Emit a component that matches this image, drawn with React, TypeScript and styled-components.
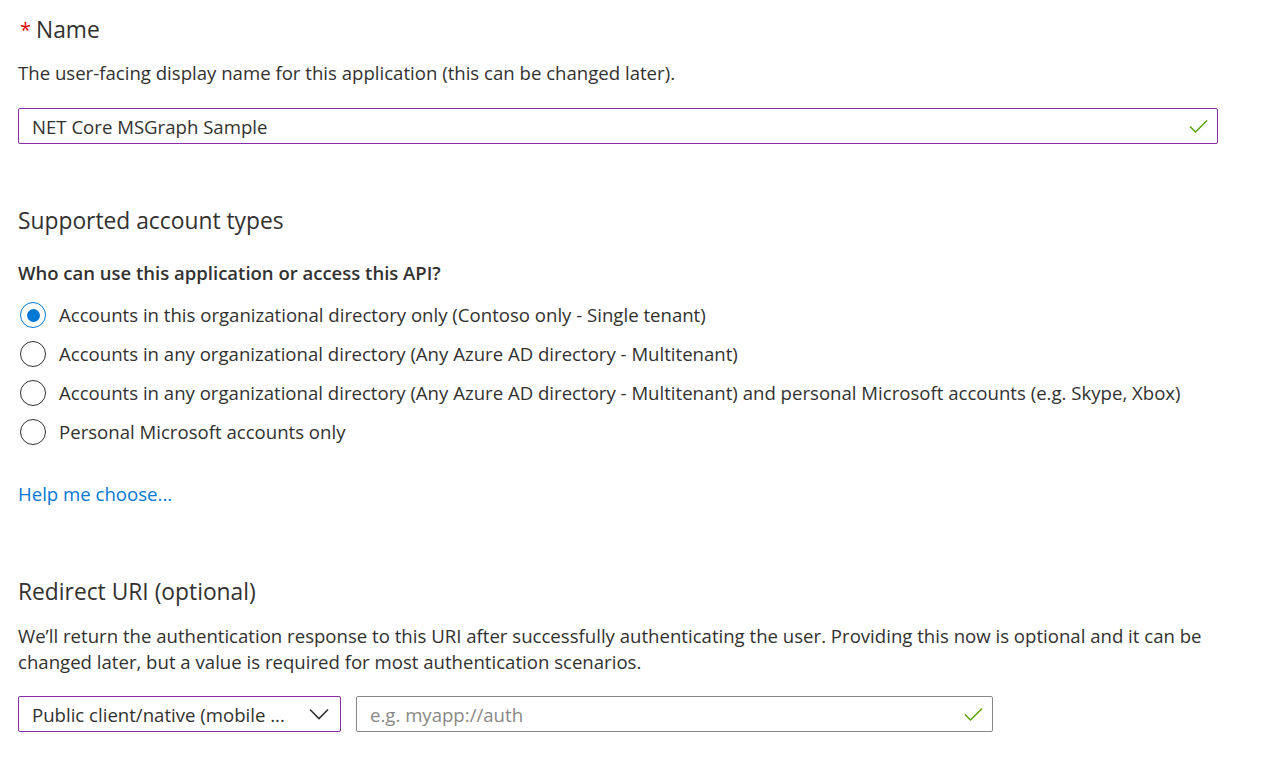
import React from "react";
import styled, { createGlobalStyle } from "styled-components";

const Global = createGlobalStyle`
  html, body { margin: 0; padding: 0; background: #fff; }
  body { font-family: "Open Sans", "Noto Sans", sans-serif; color: #323130; }
`;

const Page = styled.div`
  padding: 14px 18px 0 18px;
  width: 1200px;
  display: flex;
  flex-direction: column;
`;

const Heading = styled.div<{ $mt?: number }>`
  font-size: 22.8px;
  line-height: 32px;
  color: #323130;
  margin-top: ${(p) => p.$mt ?? 0}px;
  display: flex;
  align-items: center;
`;

const Req = styled.span`
  color: #e50000;
  font-size: 20px;
  margin: 0 5px 0 2px;
`;

const Desc = styled.p<{ $mt?: number }>`
  margin: ${(p) => p.$mt ?? 0}px 0 0 0;
  font-size: 18.6px;
  line-height: 26px;
  color: #323130;
`;

const Field = styled.div<{ $w?: string; $border?: string; $mt?: number; $pr?: number }>`
  box-sizing: border-box;
  height: 36px;
  width: ${(p) => p.$w ?? "100%"};
  margin-top: ${(p) => p.$mt ?? 0}px;
  border: 1px solid ${(p) => p.$border ?? "#8a8886"};
  border-radius: 2px;
  display: flex;
  align-items: center;
  padding: 0 ${(p) => p.$pr ?? 8}px 0 13px;
  font-size: 18.6px;
  color: #323130;
`;

const FieldText = styled.span<{ $placeholder?: boolean }>`
  flex: 1;
  color: ${(p) => (p.$placeholder ? "#8a8886" : "#323130")};
  white-space: nowrap;
  overflow: hidden;
`;

const Bold = styled.div`
  font-size: 18.5px;
  font-weight: 600;
  line-height: 26px;
  margin-top: 23px;
`;

const RadioList = styled.div`
  display: flex;
  flex-direction: column;
  gap: 13px;
  margin-top: 16px;
`;

const RadioRow = styled.label`
  display: flex;
  align-items: center;
  gap: 13px;
  font-size: 18.6px;
  line-height: 26px;
  padding-left: 2px;
  white-space: nowrap;
`;

const Circle = styled.span<{ $on?: boolean }>`
  box-sizing: border-box;
  width: 26px;
  height: 26px;
  border-radius: 50%;
  border: 1px solid ${(p) => (p.$on ? "#0078d4" : "#323130")};
  display: flex;
  align-items: center;
  justify-content: center;
  flex: none;
  &::after {
    content: "";
    width: 13px;
    height: 13px;
    border-radius: 50%;
    background: #0078d4;
    display: ${(p) => (p.$on ? "block" : "none")};
  }
`;

const Link = styled.a`
  color: #0078d4;
  font-size: 18.6px;
  line-height: 26px;
  margin-top: 36px;
  text-decoration: none;
  width: fit-content;
`;

const Row = styled.div`
  display: flex;
  gap: 15px;
  margin-top: 21px;
`;

const Check = () => (
  <svg width="22" height="18" viewBox="0 0 22 18">
    <path d="M3 9.5 L8.5 15 L20 3.5" fill="none" stroke="#57a300" strokeWidth="1.5" />
  </svg>
);

const Chevron = () => (
  <svg width="22" height="14" viewBox="0 0 22 14">
    <path d="M2 2.5 L11 11.5 L20 2.5" fill="none" stroke="#323130" strokeWidth="1.6" />
  </svg>
);

const options = [
  "Accounts in this organizational directory only (Contoso only - Single tenant)",
  "Accounts in any organizational directory (Any Azure AD directory - Multitenant)",
  "Accounts in any organizational directory (Any Azure AD directory - Multitenant) and personal Microsoft accounts (e.g. Skype, Xbox)",
  "Personal Microsoft accounts only",
];

export default function App() {
  return (
    <>
      <Global />
      <Page>
        <Heading>
          <Req>*</Req>Name
        </Heading>
        <Desc $mt={14}>The user-facing display name for this application (this can be changed later).</Desc>
        <Field $border="#8a2da5" $mt={22}>
          <FieldText>NET Core MSGraph Sample</FieldText>
          <Check />
        </Field>
        <Heading $mt={61}>Supported account types</Heading>
        <Bold>Who can use this application or access this API?</Bold>
        <RadioList>
          {options.map((o, i) => (
            <RadioRow key={i}>
              <Circle $on={i === 0} />
              {o}
            </RadioRow>
          ))}
        </RadioList>
        <Link href="#">Help me choose...</Link>
        <Heading $mt={69}>Redirect URI (optional)</Heading>
        <Desc $mt={15}>
          We’ll return the authentication response to this URI after successfully authenticating the user. Providing this now is optional and it can be changed later, but a value is required for most authentication scenarios.
        </Desc>
        <Row>
          <Field $w="323px" $border="#8a2da5" $pr={10}>
            <FieldText>Public client/native (mobile ...</FieldText>
            <Chevron />
          </Field>
          <Field $w="637px">
            <FieldText $placeholder>e.g. myapp://auth</FieldText>
            <Check />
          </Field>
        </Row>
      </Page>
    </>
  );
}
